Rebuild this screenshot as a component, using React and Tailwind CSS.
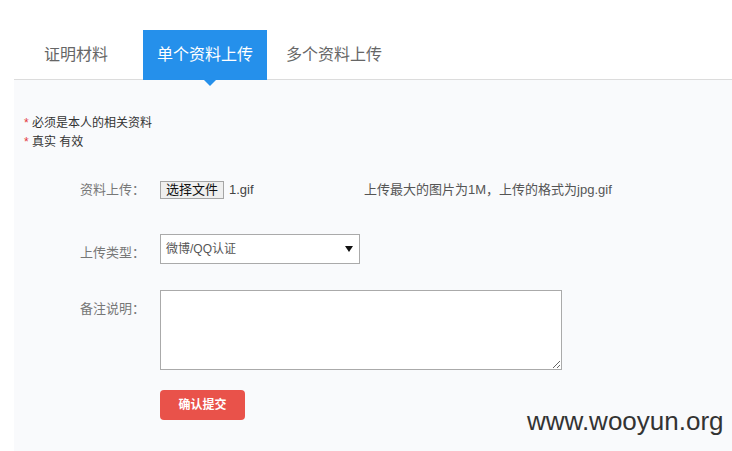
import React from 'react';

const font = { fontFamily: '"Liberation Sans", "Noto Sans CJK SC", sans-serif' };

const Tabs = () => {
    return (
        <div className="ml-[14px] pt-[30px] flex border-b border-[#dcdcdc]">
            <div className="h-[50px] -mb-px pl-[30px] pr-[35px] flex items-center text-[16px] text-[#666]">
                证明材料
            </div>
            <div className="relative h-[50px] -mb-px px-[14px] w-[124px] flex items-center justify-center bg-[#2590eb] text-[16px] text-white">
                单个资料上传
                {/* little arrow under the active tab */}
                <span className="absolute left-[61px] top-[50px] w-0 h-0 border-l-[6px] border-r-[6px] border-t-[6px] border-l-transparent border-r-transparent border-t-[#2590eb]" />
            </div>
            <div className="h-[50px] -mb-px pl-[19px] flex items-center text-[16px] text-[#666]">
                多个资料上传
            </div>
        </div>
    );
};

const Label = ({ children, className = '' }) => (
    <div className={`w-[80px] shrink-0 text-[13px] leading-[20px] text-[#777] ${className}`}>{children}</div>
);

export default function App() {
    return (
        <div className="relative w-[732px] h-[451px] bg-white overflow-hidden flex flex-col" style={font}>
            <Tabs />

            <div className="ml-[14px] flex-1 bg-[#f9fafc] pt-[34px] pl-[10px]">
                {/* notes */}
                <div className="text-[12px] leading-[19px] text-[#333]">
                    <div><span className="text-[#e4393c]">*</span> 必须是本人的相关资料</div>
                    <div><span className="text-[#e4393c]">*</span> 真实 有效</div>
                </div>

                <div className="pl-[56px]">
                    {/* file row */}
                    <div className="mt-[28px] h-[20px] flex items-center">
                        <Label>资料上传：</Label>
                        <div className="w-[204px] shrink-0 flex items-center">
                            <button className="h-[18px] w-[64px] border border-[#a5a5a5] bg-[#efefef] text-[13px] leading-[16px] text-[#111]">
                                选择文件
                            </button>
                            <span className="ml-[5px] text-[13px] text-[#444]">1.gif</span>
                        </div>
                        <span className="text-[13px] text-[#555]">上传最大的图片为1M，上传的格式为jpg.gif</span>
                    </div>

                    {/* type row */}
                    <div className="mt-[34px] flex items-start">
                        <Label className="pt-[9px]">上传类型：</Label>
                        <div className="w-[200px] h-[30px] border border-[#aaa] bg-white flex items-center justify-between pl-[5px] pr-[6px] text-[12px] text-[#555]">
                            <span>微博/QQ认证</span>
                            <svg width="8" height="6" viewBox="0 0 8 6">
                                <path d="M0 0 L8 0 L4 6 Z" fill="#111" />
                            </svg>
                        </div>
                    </div>

                    {/* remark row */}
                    <div className="mt-[26px] flex items-start">
                        <Label className="pt-[9px]">备注说明：</Label>
                        <textarea className="w-[402px] h-[80px] border border-[#aaa] bg-white block" />
                    </div>

                    <div className="mt-[20px] pl-[80px]">
                        <button className="w-[85px] h-[30px] rounded-[4px] bg-[#e9524a] text-white text-[12px] font-bold">
                            确认提交
                        </button>
                    </div>
                </div>
            </div>

            {/* watermark */}
            <div className="absolute left-[527px] top-[403px] text-[26px] leading-[36px] text-[#333]">
                www.wooyun.org
            </div>
        </div>
    );
}
